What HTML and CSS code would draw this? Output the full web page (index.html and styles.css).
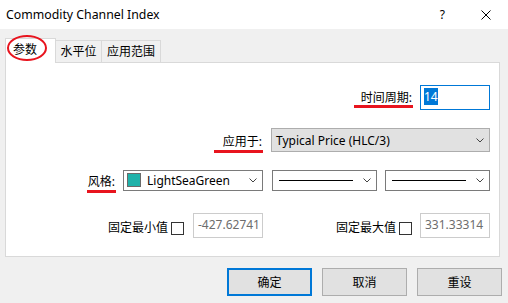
FILE: index.html
```html
<!DOCTYPE html>
<html>
<head>
<meta charset="utf-8">
<title>Commodity Channel Index</title>
<link rel="stylesheet" href="styles.css">
</head>
<body>
<div class="titlebar">
  <span class="title">Commodity Channel Index</span>
  <span class="help">?</span>
  <svg class="close" width="10" height="10" viewBox="0 0 10 10"><path d="M0.5 0.5L9.5 9.5M9.5 0.5L0.5 9.5" stroke="#000" stroke-width="1" fill="none"/></svg>
</div>
<div class="content">
  <div class="tabs">
    <div class="tab active">参数<span class="circle"></span></div>
    <div class="tab t2">水平位</div>
    <div class="tab t3">应用范围</div>
  </div>
  <div class="panel">
    <div class="row r1">
      <span class="lbl mark m1">时间周期:</span>
      <div class="input focus"><span class="sel">14</span></div>
    </div>
    <div class="row r2">
      <span class="lbl low mark m2">应用于:</span>
      <div class="combo gray">
        <span class="val">Typical Price (HLC/3)</span>
        <svg class="chev" width="8" height="5" viewBox="0 0 8 5"><polyline points="0.5,0.5 4,4 7.5,0.5" fill="none" stroke="#444" stroke-width="1"/></svg>
      </div>
    </div>
    <div class="row r3">
      <span class="lbl low mark m3">风格:</span>
      <div class="combo color">
        <span class="swatch"></span>
        <span class="val">LightSeaGreen</span>
        <svg class="chev" width="8" height="5" viewBox="0 0 8 5"><polyline points="0.5,0.5 4,4 7.5,0.5" fill="none" stroke="#444" stroke-width="1"/></svg>
      </div>
      <div class="combo line l1">
        <span class="sample"></span>
        <svg class="chev" width="8" height="5" viewBox="0 0 8 5"><polyline points="0.5,0.5 4,4 7.5,0.5" fill="none" stroke="#444" stroke-width="1"/></svg>
      </div>
      <div class="combo line l2">
        <span class="sample"></span>
        <svg class="chev" width="8" height="5" viewBox="0 0 8 5"><polyline points="0.5,0.5 4,4 7.5,0.5" fill="none" stroke="#444" stroke-width="1"/></svg>
      </div>
    </div>
    <div class="row r4">
      <div class="grp">
        <span class="lbl drop">固定最小值</span>
        <span class="cb"></span>
        <div class="input num n1">-427.62741</div>
      </div>
      <div class="grp g2">
        <span class="lbl drop">固定最大值</span>
        <span class="cb"></span>
        <div class="input num n2">331.33314</div>
      </div>
    </div>
  </div>
  <div class="buttons">
    <div class="btn default">确定</div>
    <div class="btn">取消</div>
    <div class="btn">重设</div>
  </div>
</div>
</body>
</html>
```
FILE: styles.css
```css
* { box-sizing: border-box; }
html, body { margin: 0; padding: 0; }
body {
  width: 508px;
  height: 303px;
  overflow: hidden;
  background: #f0f0f0;
  font-family: "Noto Sans", "Noto Sans CJK SC", sans-serif;
  font-size: 12px;
  color: #000;
}
.titlebar {
  height: 29px;
  background: #fff;
  display: flex;
  align-items: center;
  padding-left: 6px;
}
.title { font-size: 12.3px; line-height: 16px; }
.help { margin-left: auto; line-height: 16px; }
.close { margin-left: 36px; margin-right: 17px; }

.content { padding: 9px 6px 0 5px; }
.tabs {
  display: flex;
  align-items: flex-end;
  height: 25px;
  margin-bottom: -1px;
  position: relative;
  z-index: 1;
}
.tab {
  height: 23px;
  border: 1px solid #d9d9d9;
  border-left: none;
  background: #f0f0f0;
  text-align: center;
  line-height: 21px;
  white-space: nowrap;
}
.tab.t2 { width: 46px; }
.tab.t3 { width: 59px; }
.tab.active {
  height: 25px;
  width: 51px;
  border-left: 1px solid #d9d9d9;
  border-bottom: none;
  background: #fff;
  text-align: left;
  padding-left: 7px;
  line-height: 21px;
  position: relative;
}
.circle {
  position: absolute;
  left: 1px;
  top: -4px;
  width: 40px;
  height: 26px;
  border: 2.5px solid #e8141e;
  border-radius: 50%;
}

.panel {
  height: 195px;
  margin-right: 2px;
  border: 1px solid #d9d9d9;
  background: #fff;
  padding: 22px 9px 0 0;
}
.row {
  display: flex;
  justify-content: flex-end;
  align-items: center;
}
.r1 { height: 25px; margin-bottom: 18px; }
.r2 { height: 24px; margin-bottom: 18px; }
.r3 { height: 21px; margin-bottom: 22px; }
.r4 { height: 25px; }

.lbl { position: relative; line-height: 16px; white-space: nowrap; }
.lbl.low { padding-top: 3px; }
.lbl.drop { margin-top: 5px; }
.mark::after {
  content: "";
  position: absolute;
  height: 3px;
  background: #e8141e;
  right: -1px;
}
.m1::after { left: -7px; top: 15px; }
.m2::after { left: -9px; top: 19px; }
.m3::after { left: -1px; top: 19px; }

.r1 .lbl { margin-right: 8px; }
.r2 .lbl { margin-right: 9px; }
.r3 .lbl { margin-right: 8px; }

.input {
  width: 70px;
  height: 25px;
  border: 1px solid #cccccc;
  background: #fff;
  white-space: nowrap;
}
.input.focus {
  border-color: #0078d7;
  padding: 2px 3px;
}
.sel {
  display: inline-block;
  vertical-align: top;
  height: 17px;
  line-height: 17px;
  background: #0078d7;
  color: #fff;
}
.input.num {
  color: #6d6d6d;
  padding-left: 4px;
  line-height: 22px;
  overflow: hidden;
}

.combo {
  display: flex;
  align-items: center;
  height: 100%;
  border: 1px solid #7a7a7a;
  background: #fff;
  padding: 0 5px 0 3px;
}
.combo .val { flex: 1; white-space: nowrap; }
.combo.gray {
  width: 219px;
  background: #e1e1e1;
  border-color: #adadad;
  padding-left: 4px;
}
.combo.color { width: 140px; }
.swatch {
  width: 14px;
  height: 14px;
  background: #20b2aa;
  border: 1px solid #6a6a6a;
  margin-right: 6px;
  margin-top: -1px;
}
.combo.line {
  width: 105px;
  padding-left: 6px;
  justify-content: space-between;
}
.combo.l1 { margin-left: 9px; }
.combo.l2 { margin-left: 8px; }
.sample {
  width: 74px;
  height: 1px;
  background: #000;
}
.chev { flex: none; }

.grp { display: flex; align-items: center; height: 25px; }
.g2 { margin-left: 73px; }
.cb {
  width: 13px;
  height: 13px;
  border: 1px solid #333;
  background: #fff;
  margin-left: 3px;
  margin-top: 5px;
}
.n1 { margin-left: 9px; }
.n2 { margin-left: 8px; }

.buttons {
  display: flex;
  justify-content: flex-end;
  gap: 10px;
  margin-top: 11px;
}
.btn {
  width: 85px;
  height: 28px;
  border: 1px solid #adadad;
  background: #e1e1e1;
  display: flex;
  align-items: center;
  justify-content: center;
}
.btn.default { border: 2px solid #0078d7; }
```
